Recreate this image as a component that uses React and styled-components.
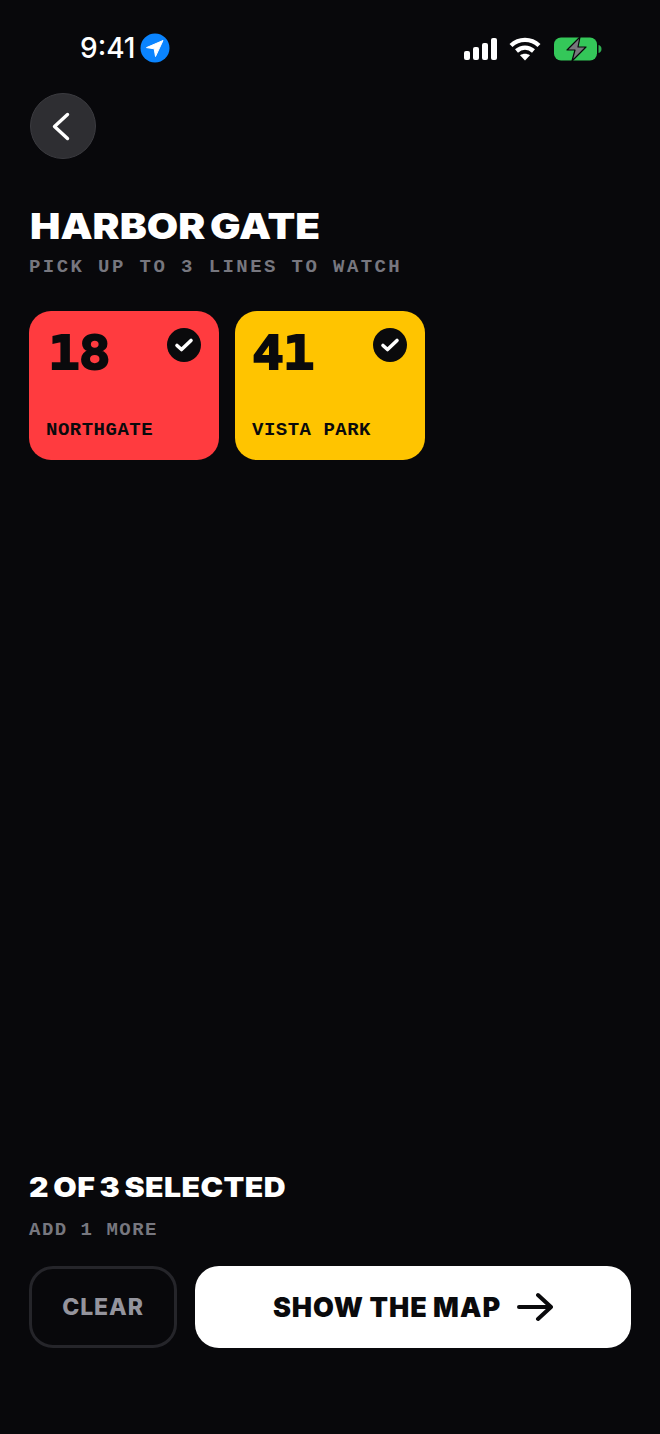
import React from "react";
import styled, { createGlobalStyle } from "styled-components";

const GlobalStyle = createGlobalStyle`
    html, body {
        margin: 0;
        padding: 0;
        background: #08080b;
    }
`;

const Page = styled.div`
    width: 660px;
    height: 1434px;
    overflow: hidden;
    display: flex;
    flex-direction: column;
    background: #08080b;
    color: #fff;
    font-family: "Inter", "Liberation Sans", sans-serif;
`;

const StatusBar = styled.div`
    height: 30px;
    padding: 33px 57px 0 80px;
    display: flex;
    align-items: center;
    justify-content: space-between;
`;

const StatusLeft = styled.div`
    display: flex;
    align-items: center;
    gap: 5px;
`;

const Clock = styled.span`
    font-size: 28px;
    font-weight: 500;
    line-height: 30px;
`;

const StatusRight = styled.div`
    padding-top: 2px;
    display: flex;
    align-items: center;
    gap: 12px;
`;

const Content = styled.div`
    padding: 30px 29px 0;
    display: flex;
    flex-direction: column;
    align-items: flex-start;
`;

const BackButton = styled.button`
    width: 66px;
    height: 66px;
    margin-left: 1px;
    padding: 0;
    border: 1px solid #3b3b40;
    border-radius: 50%;
    background: #2e2e32;
    display: flex;
    align-items: center;
    justify-content: center;
`;

const Title = styled.h1`
    margin: 47px 0 0 1px;
    font-size: 36px;
    line-height: 40px;
    font-weight: 900;
    word-spacing: -3px;
    transform: scaleX(1.126);
    transform-origin: left center;
`;

const Mono = styled.div`
    font-family: "Liberation Mono", "DejaVu Sans Mono", monospace;
    font-weight: 700;
    font-size: 19px;
    line-height: 22px;
    text-transform: uppercase;
    white-space: pre;
`;

const Subtitle = styled(Mono)`
    margin-top: 10px;
    letter-spacing: 2.42px;
    color: #77777f;
`;

const Cards = styled.div`
    margin-top: 33px;
    display: flex;
    gap: 16.5px;
`;

const Card = styled.div`
    position: relative;
    width: 189.5px;
    height: 149px;
    box-sizing: border-box;
    padding: 14px 17px 19px;
    border-radius: 22px;
    background: ${props => props.color};
    color: #0a0a0c;
    display: flex;
    flex-direction: column;
    justify-content: space-between;
`;

const LineNumber = styled.div`
    margin-left: ${props => props.shift}px;
    font-family: "DejaVu Sans Mono", monospace;
    font-size: 47px;
    line-height: 56px;
    font-weight: 700;
    letter-spacing: -1px;
    -webkit-text-stroke: 1.8px #0a0a0c;
    transform: scaleX(1.13);
    transform-origin: left center;
`;

const LineName = styled(Mono)`
    letter-spacing: 0.5px;
`;

const CheckBadge = styled.div`
    position: absolute;
    top: 17px;
    right: 17.5px;
    width: 34px;
    height: 34px;
    border-radius: 50%;
    background: #0a0a0c;
    display: flex;
    align-items: center;
    justify-content: center;
`;

const Footer = styled.div`
    margin-top: auto;
    padding: 0 29px 86px;
    display: flex;
    flex-direction: column;
`;

const Count = styled.div`
    font-size: 27px;
    line-height: 30px;
    font-weight: 900;
    word-spacing: -2px;
    letter-spacing: 0.4px;
    transform: scaleX(1.12);
    transform-origin: left center;
`;

const Hint = styled(Mono)`
    margin-top: 16px;
    letter-spacing: 1.5px;
    color: #77777f;
`;

const Actions = styled.div`
    margin-top: 25px;
    display: flex;
    gap: 18px;
`;

const ClearButton = styled.button`
    width: 148px;
    height: 82px;
    box-sizing: border-box;
    border: 3px solid #25252a;
    border-radius: 24px;
    background: transparent;
    color: #94949d;
    font-family: inherit;
    font-size: 23px;
    font-weight: 800;
    letter-spacing: 0.9px;
`;

const MapButton = styled.button`
    width: 436px;
    height: 82px;
    border: none;
    border-radius: 24px;
    background: #fff;
    color: #0a0a0c;
    font-family: inherit;
    font-size: 27px;
    font-weight: 900;
    letter-spacing: 1px;
    word-spacing: -1px;
    display: flex;
    align-items: center;
    justify-content: center;
    gap: 16px;
`;

const lines = [
    { number: "18", name: "Northgate", color: "#ff3b3f", shift: 2 },
    { number: "41", name: "Vista Park", color: "#ffc400", shift: 0 }
];

const LocationIcon = () => (
    <svg width="30" height="30" viewBox="0 0 30 30">
        <circle cx="15" cy="15" r="14.5" fill="#0a84ff" />
        <path
            d="M23 7.5 L6.5 14.6 L14.2 15.8 L15.5 23.5 Z"
            fill="#fff"
            stroke="#fff"
            strokeWidth="1"
            strokeLinejoin="round"
        />
    </svg>
);

const SignalIcon = () => (
    <svg width="33" height="22" viewBox="0 0 33 22" fill="#fff">
        <rect x="0" y="13" width="6" height="9" rx="2" />
        <rect x="9" y="9" width="6" height="13" rx="2" />
        <rect x="18" y="5" width="6" height="17" rx="2" />
        <rect x="27" y="0" width="6" height="22" rx="2" />
    </svg>
);

const WifiIcon = () => (
    <svg width="32" height="24" viewBox="0 0 32 24" fill="none" stroke="#fff">
        <path d="M2 8.5 C10 1 22 1 30 8.5" strokeWidth="4.4" />
        <path d="M7.5 14 C12.5 9.5 19.5 9.5 24.5 14" strokeWidth="4.4" />
        <path d="M16 23.5 L11 18.2 C14 16.2 18 16.2 21 18.2 Z" fill="#fff" stroke="none" />
    </svg>
);

const BatteryIcon = () => (
    <svg width="50" height="26" viewBox="0 0 50 26">
        <rect x="1" y="1.5" width="43" height="23" rx="7" fill="#34c759" />
        <path d="M45.5 9 C49.5 9.5 49.5 16.5 45.5 17 Z" fill="#2fae50" />
        <path
            d="M27 1 L14 14 H22 L19 25 L33 11 H25 Z"
            fill="#77777c"
            stroke="#08080b"
            strokeWidth="1.2"
            strokeLinejoin="round"
        />
    </svg>
);

const BackIcon = () => (
    <svg width="22" height="32" viewBox="0 0 22 32" fill="none">
        <path
            d="M15.5 4.5 L2.5 16.5 L15.5 28.5"
            stroke="#fff"
            strokeWidth="3.4"
            strokeLinecap="round"
            strokeLinejoin="round"
        />
    </svg>
);

const CheckIcon = () => (
    <svg width="20" height="16" viewBox="0 0 20 16" fill="none">
        <path
            d="M3 8.5 L7.5 12.5 L17 3.5"
            stroke="#fff"
            strokeWidth="3.6"
            strokeLinecap="round"
            strokeLinejoin="round"
        />
    </svg>
);

const ArrowIcon = () => (
    <svg width="36" height="30" viewBox="0 0 36 30" fill="none">
        <path
            d="M2 15 H34 M21 3 L34 15 L21 27"
            stroke="#0a0a0c"
            strokeWidth="4"
            strokeLinecap="round"
            strokeLinejoin="round"
        />
    </svg>
);

const App = () => (
    <Page>
        <GlobalStyle />
        <StatusBar>
            <StatusLeft>
                <Clock>9:41</Clock>
                <LocationIcon />
            </StatusLeft>
            <StatusRight>
                <SignalIcon />
                <WifiIcon />
                <BatteryIcon />
            </StatusRight>
        </StatusBar>
        <Content>
            <BackButton aria-label="Back">
                <BackIcon />
            </BackButton>
            <Title>HARBOR GATE</Title>
            <Subtitle>Pick up to 3 lines to watch</Subtitle>
            <Cards>
                {lines.map(line => (
                    <Card key={line.number} color={line.color}>
                        <LineNumber shift={line.shift}>{line.number}</LineNumber>
                        <LineName>{line.name}</LineName>
                        <CheckBadge>
                            <CheckIcon />
                        </CheckBadge>
                    </Card>
                ))}
            </Cards>
        </Content>
        <Footer>
            <Count>2 OF 3 SELECTED</Count>
            <Hint>Add 1 more</Hint>
            <Actions>
                <ClearButton>CLEAR</ClearButton>
                <MapButton>
                    SHOW THE MAP
                    <ArrowIcon />
                </MapButton>
            </Actions>
        </Footer>
    </Page>
);

export default App;
